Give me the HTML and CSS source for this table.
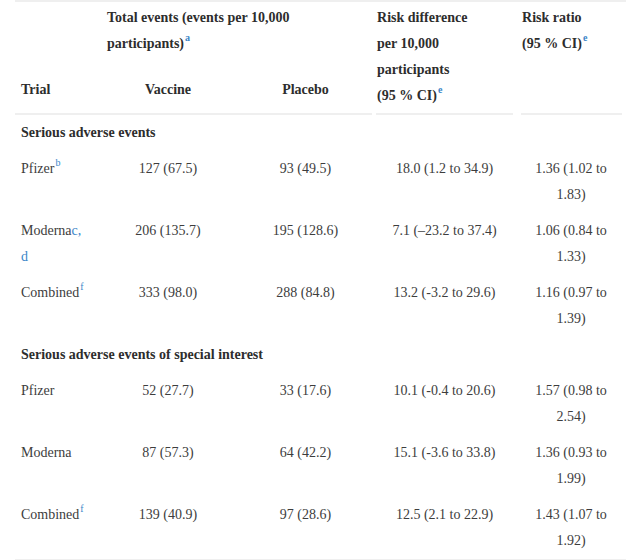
FILE: index.html
```html
<!DOCTYPE html>
<html lang="en">
<head>
<meta charset="utf-8">
<title>Serious adverse events</title>
<link rel="stylesheet" href="styles.css">
</head>
<body>
<table class="sae">
  <colgroup>
    <col class="c-trial"><col class="c-vac"><col class="c-pla"><col class="c-rd"><col class="c-rr">
  </colgroup>
  <thead>
    <tr class="h1">
      <th class="blank"></th>
      <th colspan="2" class="group">Total events (events per 10,000<br>participants)<sup>a</sup></th>
      <th rowspan="2" class="rd">Risk difference<br>per 10,000<br>participants<br>(95 % CI)<sup>e</sup></th>
      <th rowspan="2" class="rr">Risk ratio<br>(95 % CI)<sup>e</sup></th>
    </tr>
    <tr class="h2">
      <th class="trial">Trial</th>
      <th class="vac">Vaccine</th>
      <th class="pla">Placebo</th>
    </tr>
  </thead>
  <tbody>
    <tr class="section"><td colspan="5">Serious adverse events</td></tr>
    <tr>
      <td class="trial">Pfizer<sup>b</sup></td>
      <td class="vac">127 (67.5)</td>
      <td class="pla">93 (49.5)</td>
      <td class="rd">18.0 (1.2 to 34.9)</td>
      <td class="rr">1.36 (1.02 to 1.83)</td>
    </tr>
    <tr>
      <td class="trial">Moderna<span class="ref">c,<br>d</span></td>
      <td class="vac">206 (135.7)</td>
      <td class="pla">195 (128.6)</td>
      <td class="rd">7.1 (–23.2 to 37.4)</td>
      <td class="rr">1.06 (0.84 to 1.33)</td>
    </tr>
    <tr>
      <td class="trial">Combined<sup>f</sup></td>
      <td class="vac">333 (98.0)</td>
      <td class="pla">288 (84.8)</td>
      <td class="rd">13.2 (-3.2 to 29.6)</td>
      <td class="rr">1.16 (0.97 to 1.39)</td>
    </tr>
    <tr class="section"><td colspan="5">Serious adverse events of special interest</td></tr>
    <tr>
      <td class="trial">Pfizer</td>
      <td class="vac">52 (27.7)</td>
      <td class="pla">33 (17.6)</td>
      <td class="rd">10.1 (-0.4 to 20.6)</td>
      <td class="rr">1.57 (0.98 to 2.54)</td>
    </tr>
    <tr>
      <td class="trial">Moderna</td>
      <td class="vac">87 (57.3)</td>
      <td class="pla">64 (42.2)</td>
      <td class="rd">15.1 (-3.6 to 33.8)</td>
      <td class="rr">1.36 (0.93 to 1.99)</td>
    </tr>
    <tr>
      <td class="trial">Combined<sup>f</sup></td>
      <td class="vac">139 (40.9)</td>
      <td class="pla">97 (28.6)</td>
      <td class="rd">12.5 (2.1 to 22.9)</td>
      <td class="rr">1.43 (1.07 to 1.92)</td>
    </tr>
  </tbody>
</table>
</body>
</html>
```
FILE: styles.css
```css
body {
  margin: 0;
  background: #ffffff;
  font-family: "Liberation Serif", "Times New Roman", serif;
  font-size: 14px;
  color: #3d3d3d;
}

.sae {
  margin-left: 15px;
  width: 611px;
  table-layout: fixed;
  border-collapse: separate;
  border-spacing: 0;
  border-top: 2px solid #efefef;
  border-bottom: 2px solid #efefef;
  line-height: 26px;
}

.c-trial { width: 86px; }
.c-vac { width: 134px; }
.c-pla { width: 137px; }
.c-rd { width: 145px; }
.c-rr { width: 109px; }

th {
  font-weight: bold;
  color: #2d2d2d;
  text-align: left;
  vertical-align: top;
  padding: 0;
}

.h1 { height: 55px; }
.h2 { height: 58px; }

.h1 .group {
  padding: 3px 6px 0 6px;
}

.h1 .rd,
.h1 .rr {
  padding: 3px 0 6px 5px;
  background-image: linear-gradient(#efefef, #efefef);
  background-repeat: no-repeat;
  background-size: calc(100% - 8px) 2px;
  background-position: 4px 100%;
}

.h2 th {
  vertical-align: bottom;
  padding-bottom: 10px;
  border-bottom: 2px solid #efefef;
}

.h2 .trial { padding-left: 6px; }
.h2 .vac { text-align: center; padding-left: 6px; padding-right: 6px; }
.h2 .pla { text-align: center; padding-left: 8px; padding-right: 4px; }

td {
  vertical-align: top;
  text-align: center;
  padding: 5px 6px;
}

td.trial { text-align: left; }
td.pla { padding-left: 8px; padding-right: 4px; }
td.rd { padding-left: 5px; padding-right: 5px; }
td.rr { padding-left: 5px; padding-right: 6px; }

.section td {
  text-align: left;
  font-weight: bold;
  color: #2d2d2d;
}

sup {
  font-size: 10px;
  line-height: 0;
  vertical-align: 7px;
  margin-left: 1px;
  color: #3a86c8;
  font-weight: normal;
}

th sup { font-weight: bold; }

.ref { color: #3a86c8; }
```
